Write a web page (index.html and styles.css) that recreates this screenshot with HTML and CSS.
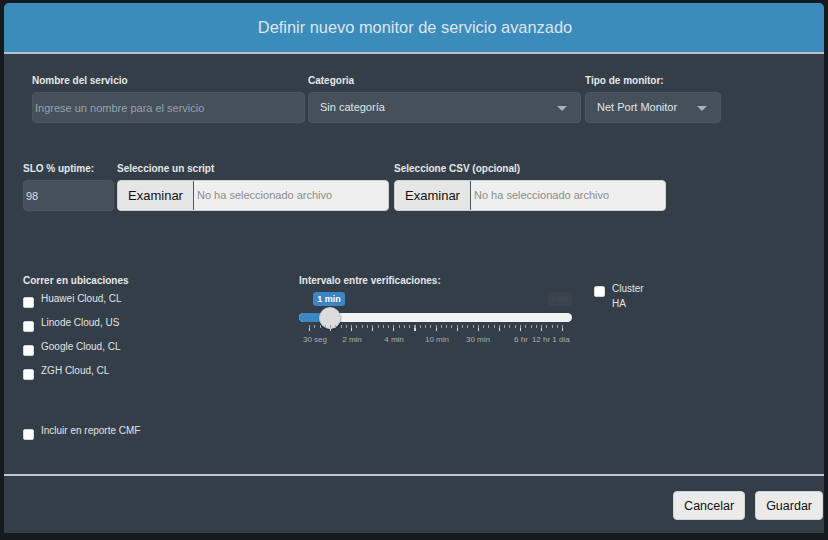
FILE: index.html
```html
<!DOCTYPE html>
<html lang="es">
<head>
    <meta charset="UTF-8">
    <title>Definir nuevo monitor de servicio avanzado</title>
    <link rel="stylesheet" href="styles.css">
</head>
<body>
    <div class="modal">
        <div class="modal-header">Definir nuevo monitor de servicio avanzado</div>

        <div class="modal-body">
            <div class="row row-main">
                <div class="field f-name">
                    <div class="field-label">Nombre del servicio</div>
                    <input class="text-input" type="text" placeholder="Ingrese un nombre para el servicio">
                </div>
                <div class="field f-cat">
                    <div class="field-label">Categoria</div>
                    <div class="select">Sin categoría<span class="caret"></span></div>
                </div>
                <div class="field f-type">
                    <div class="field-label">Tipo de monitor:</div>
                    <div class="select">Net Port Monitor<span class="caret"></span></div>
                </div>
            </div>

            <div class="row row-files">
                <div class="field f-slo">
                    <div class="field-label">SLO % uptime:</div>
                    <input class="text-input" type="text" value="98">
                </div>
                <div class="field f-file">
                    <div class="field-label">Seleccione un script</div>
                    <label class="file">
                        <span class="file-btn">Examinar</span>
                        <span class="file-name">No ha seleccionado archivo</span>
                    </label>
                </div>
                <div class="field f-file">
                    <div class="field-label">Seleccione CSV (opcional)</div>
                    <label class="file">
                        <span class="file-btn">Examinar</span>
                        <span class="file-name">No ha seleccionado archivo</span>
                    </label>
                </div>
            </div>

            <div class="row row-options">
                <div class="locations">
                    <div class="field-label">Correr en ubicaciones</div>
                    <label class="check"><input type="checkbox"><span>Huawei Cloud, CL</span></label>
                    <label class="check"><input type="checkbox"><span>Linode Cloud, US</span></label>
                    <label class="check"><input type="checkbox"><span>Google Cloud, CL</span></label>
                    <label class="check"><input type="checkbox"><span>ZGH Cloud, CL</span></label>
                </div>

                <div class="interval">
                    <div class="field-label">Intervalo entre verificaciones:</div>
                    <div class="slider">
                        <span class="slider-tip">1 min</span>
                        <span class="slider-max">1 dia</span>
                        <div class="track"><div class="track-fill"></div></div>
                        <span class="handle"></span>
                        <div class="ticks">
                            <div class="ticks-major"></div>
                            <div class="ticks-minor"></div>
                        </div>
                        <span class="tick-label" style="left: 16px">30 seg</span>
                        <span class="tick-label" style="left: 53px">2 min</span>
                        <span class="tick-label" style="left: 95px">4 min</span>
                        <span class="tick-label" style="left: 138px">10 min</span>
                        <span class="tick-label" style="left: 179px">30 min</span>
                        <span class="tick-label" style="left: 222px">6 hr</span>
                        <span class="tick-label" style="left: 242px">12 hr</span>
                        <span class="tick-label" style="left: 262px">1 dia</span>
                    </div>
                </div>

                <label class="check cluster"><input type="checkbox"><span>Cluster<br>HA</span></label>
            </div>

            <div class="row row-report">
                <label class="check"><input type="checkbox"><span>Incluir en reporte CMF</span></label>
            </div>
        </div>

        <div class="modal-footer">
            <button class="btn">Cancelar</button>
            <button class="btn">Guardar</button>
        </div>
    </div>
</body>
</html>
```

FILE: styles.css
```css
* {
    margin: 0;
    padding: 0;
    box-sizing: border-box;
}

body {
    font-family: 'Liberation Sans', Arial, sans-serif;
    background: #16191d;
    width: 828px;
    height: 540px;
    overflow: hidden;
    padding: 3px 0 0 4px;
}

.modal {
    width: 820px;
    height: 530px;
    background: #343e48;
    border-radius: 5px 5px 0 0;
    overflow: hidden;
    display: flex;
    flex-direction: column;
}

.modal-header {
    height: 51px;
    background: #3b8cbd;
    border-bottom: 2px solid #b7c3cc;
    color: #dfe5ea;
    font-size: 16.4px;
    line-height: 49px;
    text-align: center;
    padding-left: 2px;
}

.modal-body {
    height: 422px;
    padding-top: 21px;
    border-bottom: 2px solid #bfc7cd;
}

.row {
    display: flex;
}

.field-label {
    color: #e4e7ea;
    font-size: 10px;
    font-weight: bold;
    line-height: 12px;
    margin-bottom: 5px;
}

.row-main {
    padding-left: 28px;
    gap: 3px;
}

.f-name { width: 273px; }
.f-cat { width: 273px; margin-right: 1px; }
.f-type { width: 136px; }

.text-input {
    display: block;
    width: 100%;
    height: 31px;
    background: #45505b;
    border: 1px solid #4b5662;
    border-radius: 4px;
    color: #d8dde1;
    font-family: inherit;
    font-size: 11px;
    padding: 0 2px;
    outline: none;
}

.text-input::placeholder {
    color: #98a1a9;
}

.select {
    position: relative;
    height: 31px;
    background: #45505b;
    border: 1px solid #4b5662;
    border-radius: 4px;
    color: #e2e5e8;
    font-size: 11px;
    line-height: 29px;
    padding-left: 11px;
}

.caret {
    position: absolute;
    right: 13px;
    top: 13px;
    border-left: 5px solid transparent;
    border-right: 5px solid transparent;
    border-top: 5px solid #a9b1b8;
}

.row-files {
    margin-top: 40px;
    padding-left: 19px;
    gap: 3px;
}

.f-slo { width: 91px; }
.f-file { width: 272px; margin-right: 2px; }

.file {
    display: flex;
    height: 31px;
    background: #efefef;
    border: 1px solid #cfcfcf;
    border-radius: 4px;
    overflow: hidden;
}

.file-btn {
    width: 76px;
    background: #e6e6e6;
    border-right: 1px solid #4b5662;
    color: #111;
    font-size: 13px;
    line-height: 29px;
    text-align: center;
}

.file-name {
    color: #8c8c8c;
    font-size: 11px;
    line-height: 29px;
    padding-left: 3px;
}

.row-options {
    margin-top: 64px;
    padding-left: 19px;
}

.locations {
    width: 276px;
}

.check {
    display: flex;
    align-items: flex-start;
    gap: 7px;
    color: #e1e4e7;
    font-size: 10px;
    line-height: 12px;
    margin-bottom: 9px;
}

.check input {
    appearance: none;
    width: 11px;
    height: 11px;
    margin-top: 4px;
    background: #fff;
    border: 1px solid #d5d5d5;
    border-radius: 2px;
    flex-shrink: 0;
}

.locations .field-label {
    margin-bottom: 6px;
}

.interval {
    width: 273px;
    margin-right: 22px;
}

.slider {
    position: relative;
    height: 56px;
    margin-top: 4px;
}

.slider-tip {
    position: absolute;
    left: 14px;
    top: 0;
    width: 32px;
    height: 14px;
    background: #3a86c4;
    border-radius: 3px;
    color: #fff;
    font-size: 9px;
    font-weight: bold;
    line-height: 14px;
    text-align: center;
}

.slider-max {
    position: absolute;
    left: 249px;
    top: 0;
    width: 24px;
    height: 14px;
    background: #3a434c;
    border-radius: 3px;
    color: #424b54;
    font-size: 8px;
    line-height: 14px;
    text-align: center;
}

.track {
    position: absolute;
    left: 0;
    top: 21px;
    width: 273px;
    height: 9px;
    background: #f3f3f3;
    border-radius: 5px;
    overflow: hidden;
}

.track-fill {
    width: 32px;
    height: 100%;
    background: #3a86c4;
}

.handle {
    position: absolute;
    left: 20px;
    top: 15px;
    width: 22px;
    height: 22px;
    background: #dcdcdc;
    border: 1px solid #c9c9c9;
    border-radius: 50%;
    box-shadow: 0 1px 2px rgba(0,0,0,0.3);
}

.ticks {
    position: absolute;
    left: 10px;
    top: 33px;
    width: 255px;
}

.ticks-major {
    height: 6px;
    background: repeating-linear-gradient(to right, #d3d8dc 0 1px, transparent 1px 21.1px);
}

.ticks-minor {
    position: absolute;
    top: 0;
    left: 0;
    width: 100%;
    height: 3px;
    background: repeating-linear-gradient(to right, #9aa3ab 0 1px, transparent 1px 5.275px);
}

.tick-label {
    position: absolute;
    top: 43px;
    transform: translateX(-50%);
    color: #a7aeb5;
    font-size: 8px;
    white-space: nowrap;
}

.cluster {
    margin-top: 6px;
    line-height: 15px;
}

.cluster input {
    margin-top: 5px;
}

.row-report {
    margin-top: 36px;
    padding-left: 19px;
}

.modal-footer {
    flex: 1;
    display: flex;
    justify-content: flex-end;
    align-items: flex-start;
    gap: 10px;
    padding: 15px 1px 0 0;
}

.btn {
    height: 29px;
    padding: 0 10px;
    background: #ebebeb;
    border: 1px solid #d2d2d2;
    border-radius: 4px;
    color: #111;
    font-family: inherit;
    font-size: 12.5px;
    cursor: pointer;
}
```
